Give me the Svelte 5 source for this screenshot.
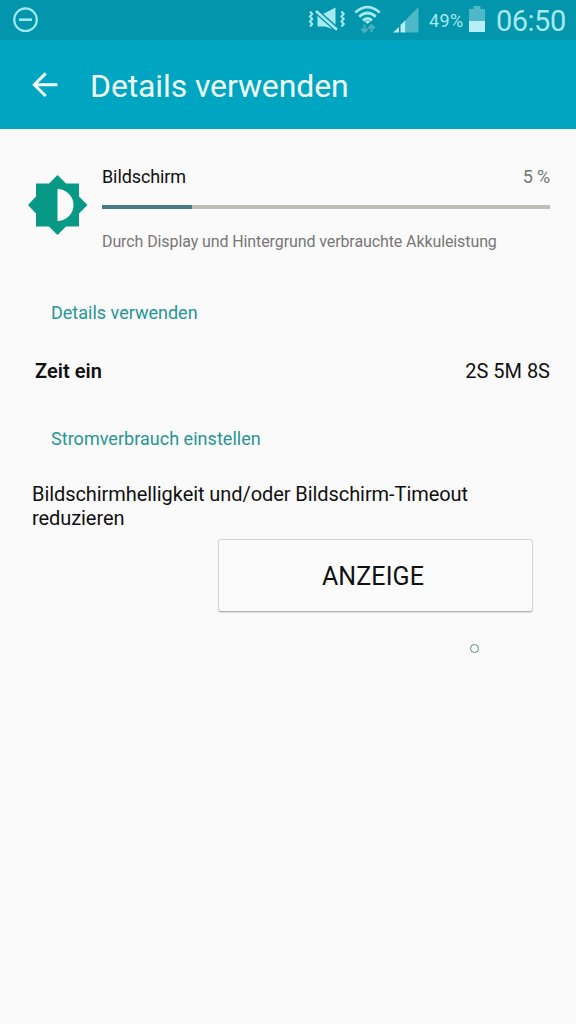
<script>
  const usage = { label: 'Bildschirm', percent: 5, fill: 20 };
</script>

<div class="screen">
  <header>
    <div class="status">
      <svg class="dnd" width="28" height="28" viewBox="0 0 28 28" fill="none" stroke="#9ee9f2">
        <circle cx="13.500" cy="13.700" r="11.300" stroke-width="2.200" />
        <path d="M7 13.700h13" stroke-width="2.600" />
      </svg>
      <svg class="mute" width="38" height="26" viewBox="0 0 38 26">
        <path d="M9.500 6.500h6.500L27.500 0.500v22.500L17 19.500H9.500z" fill="#a5eaf1" />
        <path d="M7 3L30 23.500" stroke="#0295ab" stroke-width="5.400" />
        <path d="M8 4L29 22.700" stroke="#a5eaf1" stroke-width="2.600" />
        <path d="M2 4.500l2.200 2.500-2.200 2.500 2.200 2.500-2.200 2.500 2.200 2.500-2.200 2.500M33.500 4.500l2.200 2.500-2.200 2.500 2.200 2.500-2.200 2.500 2.200 2.500-2.200 2.500" fill="none" stroke="#a5eaf1" stroke-width="2" />
      </svg>
      <svg class="wifi" width="28" height="30" viewBox="0 0 28 30" fill="none">
        <path d="M1.300 7.500Q13.500-3.300 25.700 7.500M5.200 11.700Q13.500 4.300 21.800 11.700M9 15.500Q13.500 11.600 18 15.500" stroke="#a5eaf1" stroke-width="2.800" />
        <path d="M10.700 16.400Q13.500 14.600 16.300 16.400L13.500 19z" fill="#a5eaf1" />
        <path d="M10.500 19.500v7M7.300 23.800l3.200 3.200 3.200-3.200M17.500 27v-7M14.300 23.400l3.200-3.200 3.200 3.200" stroke="#46b1c1" stroke-width="2.200" />
      </svg>
      <svg class="signal" width="26" height="26" viewBox="0 0 26 26">
        <path d="M13 25.500V12.500L25.500 0V25.500z" fill="#4eb8c8" />
        <path d="M0 25.500L6 20v5.500zM7.500 25.500v-7.500L12.500 13V25.500z" fill="#b5eff5" />
      </svg>
      <span class="level">49%</span>
      <svg class="battery" width="16" height="26" viewBox="0 0 16 26">
        <path d="M0 3h4.500V0h7v3H16v12H0z" fill="#4eb8c8" />
        <path d="M0 15h16v11H0z" fill="#b5eff5" />
      </svg>
      <time>06:50</time>
    </div>
    <div class="appbar">
      <svg width="26" height="26" viewBox="0 0 26 26" fill="none" stroke="#effdff" stroke-width="3">
        <path d="M25.500 12.700H2.500M13.700 1.400L2.300 12.700l11.400 11.300" />
      </svg>
      <h1>Details verwenden</h1>
    </div>
  </header>

  <main>
    <section class="usage">
      <svg width="60" height="60" viewBox="0 0 60 60">
        <path d="M29.500 0l8.500 8.500h13v13L59.500 30l-8.500 8.500v13h-13L29.500 60l-8.500-8.500h-13v-13L0 30l8-8.500v-13h13z" fill="#079985" />
        <path d="M29.500 14a16 16 0 0 1 0 32z" fill="#fafafa" />
      </svg>
      <div class="info">
        <div class="row"><span class="name">{usage.label}</span><span class="pct">{usage.percent} %</span></div>
        <div class="track"><div class="fill" style="width: {usage.fill}%"></div></div>
        <p>Durch Display und Hintergrund verbrauchte Akkuleistung</p>
      </div>
    </section>

    <h2 class="first">Details verwenden</h2>
    <div class="time"><strong>Zeit ein</strong><span>2S 5M 8S</span></div>
    <h2 class="second">Stromverbrauch einstellen</h2>
    <p class="hint">Bildschirmhelligkeit und/oder Bildschirm-Timeout<br />reduzieren</p>
    <button>ANZEIGE</button>
    <div class="ring"></div>
  </main>
</div>

<style>
  .screen {
    width: 576px;
    height: 1024px;
    overflow: hidden;
    background: #fafafa;
    font-family: Roboto, sans-serif;
    color: #111;
  }
  svg { display: block; flex: none; }
  h1, h2, p { margin: 0; font-weight: 400; white-space: nowrap; }
  .status {
    display: flex;
    height: 40px;
    box-sizing: border-box;
    background: #0295ab;
    color: #a5eaf1;
  }
  .dnd { margin: 6px 0 0 12px; }
  .mute { margin: 7px 0 0 268px; }
  .wifi { margin: 5px 0 0 8px; }
  .signal { margin: 7px 0 0 11px; }
  .level { margin-left: 10px; width: 36px; font-size: 18px; letter-spacing: 0.4px; line-height: 41px; white-space: nowrap; }
  .battery { margin: 6px 0 0 4px; }
  time { margin-left: 11px; font-size: 29px; letter-spacing: -0.5px; line-height: 42px; }
  .appbar {
    display: flex;
    align-items: center;
    height: 89px;
    background: #00a5c1;
    color: #effdff;
  }
  .appbar svg { margin-left: 32px; }
  h1 { margin: 3px 0 0 32px; font-size: 32px; letter-spacing: -0.12px; line-height: 40px; }
  .usage { display: flex; padding: 35px 26px 0 28px; }
  .usage svg { margin-top: 11px; }
  .info { flex: 1; margin-left: 14px; }
  .row { display: flex; justify-content: space-between; font-size: 18px; line-height: 26px; }
  .name { letter-spacing: -0.1px; }
  .pct { color: #747474; letter-spacing: -0.15px; }
  .track { height: 4px; margin-top: 15px; background: #bebeb9; }
  .fill { height: 100%; background: #457d82; }
  .usage p { margin-top: 20px; font-size: 16px; letter-spacing: -0.1px; line-height: 25px; color: #777; }
  h2 { margin-left: 51px; font-size: 18px; line-height: 24px; color: #259696; }
  .first { margin-top: 47px; }
  .time {
    display: flex;
    justify-content: space-between;
    margin: 34px 26px 0 35px;
    font-size: 20px;
    line-height: 24px;
  }
  strong { font-weight: 600; letter-spacing: 0.05px; }
  .second { margin-top: 44px; letter-spacing: 0.03px; }
  .hint { margin: 31px 0 0 32px; font-size: 20px; letter-spacing: -0.07px; line-height: 24px; }
  button {
    display: block;
    width: 315px;
    height: 73px;
    margin: 9px 0 0 218px;
    padding: 2px 5px 0 0;
    border: 1px solid #d4d4d4;
    border-bottom-color: #b5b5b5;
    border-radius: 3px;
    background: #fbfbfb;
    box-shadow: 0 1px 1px #ddd;
    font: 400 25px Roboto, sans-serif;
    letter-spacing: 0.1px;
    color: #111;
  }
  .ring {
    width: 7px;
    height: 7px;
    margin: 32px 0 0 470px;
    border: 1.500px solid #578e80;
    border-radius: 50%;
  }
</style>
